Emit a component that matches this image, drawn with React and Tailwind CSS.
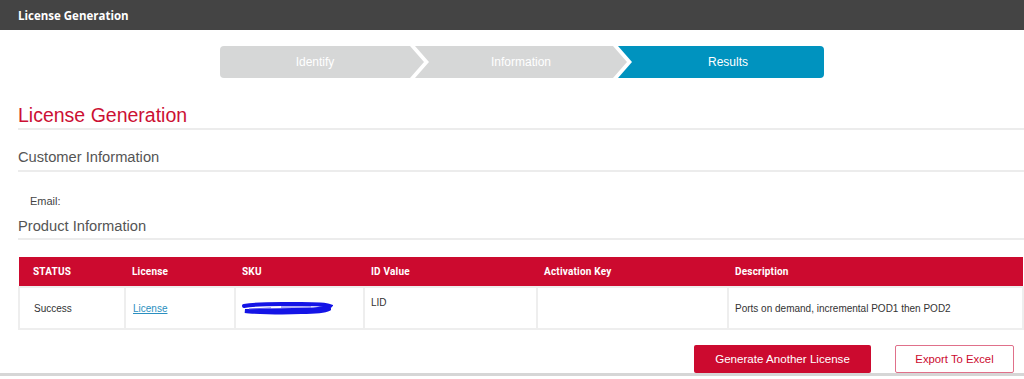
import React from "react";

const steps = [
    { label: "Identify", state: "done", cls: "w-[204px] rounded-l-[4px] pr-[14px] [clip-path:polygon(0_0,calc(100%_-_14px)_0,100%_50%,calc(100%_-_14px)_100%,0_100%)]" },
    { label: "Information", state: "done", cls: "w-[212px] -ml-[9px] px-[14px] [clip-path:polygon(0_0,calc(100%_-_14px)_0,100%_50%,calc(100%_-_14px)_100%,0_100%,14px_50%)]" },
    { label: "Results", state: "active", cls: "flex-1 -ml-[9px] rounded-r-[4px] pl-[14px] [clip-path:polygon(0_0,100%_0,100%_100%,0_100%,14px_50%)]" },
];

const columns = [
    { key: "status", label: "STATUS", width: "w-[106px]" },
    { key: "license", label: "License", width: "w-[110px]" },
    { key: "sku", label: "SKU", width: "w-[129px]" },
    { key: "idValue", label: "ID Value", width: "w-[173px]" },
    { key: "activationKey", label: "Activation Key", width: "w-[191px]" },
    { key: "description", label: "Description", width: "" },
];

// redacted SKU value in the screenshot
const Scribble = () => (
    <svg width="92" height="14" viewBox="0 0 92 14">
        <path
            d="M3 5 C20 2 40 3 60 3 C72 3 84 3 89 5 C86 8 70 9 52 9 C36 9 16 10 4 10 C10 11 40 12 60 11 C74 11 84 10 88 8"
            fill="none"
            stroke="#1414e6"
            strokeWidth="4"
            strokeLinecap="round"
        />
        <path d="M8 8 L30 7 M40 6 L70 6" stroke="#5a5af0" strokeWidth="1" />
    </svg>
);

const Stepper = () => (
    <div className="flex h-[32px] w-[604px] ml-[220px] mt-[16px] text-[12px] text-white">
        {steps.map((step) => (
            <div
                key={step.label}
                className={`shrink-0 flex items-center justify-center ${step.cls} ${
                    step.state === "active" ? "bg-[#0093bf]" : "bg-[#d6d7d7]"
                }`}
            >
                {step.label}
            </div>
        ))}
    </div>
);

const App = () => {
    return (
        <div className="w-[1024px] h-[379px] bg-white overflow-hidden font-['Liberation_Sans',Arial,sans-serif]">
            {/* Top bar */}
            <div className="h-[30px] bg-[#444444] flex items-center pl-[18px] pt-[1px]">
                <span className="text-white text-[11.5px] font-bold font-['Open_Sans',sans-serif]">License Generation</span>
            </div>

            <Stepper />

            <div className="pl-[18px]">
                <div className="mt-[26px] h-[26px] border-b-2 border-[#ececec] text-[19.5px] leading-[22px] text-[#cc1033]">
                    License Generation
                </div>

                <div className="pt-[18px] pb-[4px] border-b-2 border-[#ececec] text-[14.7px] leading-[18px] text-[#555555]">
                    Customer Information
                </div>

                <div className="mt-[22px] pl-[12px] text-[11px] leading-[14px] text-[#444444]">Email:</div>

                <div className="mt-[9px] pb-[3px] border-b-2 border-[#ececec] text-[14.7px] leading-[18px] text-[#555555]">
                    Product Information
                </div>

                {/* Results table */}
                <table className="mt-[17px] w-[1006px] table-fixed border-collapse text-[10px]">
                    <thead>
                        <tr className="h-[30px] bg-[#cc0a2f] text-white">
                            {columns.map((col, i) => (
                                <th
                                    key={col.key}
                                    className={`${col.width} ${i === 0 ? "pl-[14px]" : "pl-[7px]"} text-left font-bold font-['Roboto',sans-serif] tracking-[0.2px]`}
                                >
                                    {col.label}
                                </th>
                            ))}
                        </tr>
                    </thead>
                    <tbody>
                        <tr className="h-[42px] text-[#333333]">
                            <td className="border-2 border-[#eeeeee] pl-[14px]">Success</td>
                            <td className="border-2 border-[#eeeeee] pl-[7px]">
                                <a className="text-[#2a8fc0] underline" href="#">License</a>
                            </td>
                            <td className="border-2 border-[#eeeeee] pl-[5px]">
                                <Scribble />
                            </td>
                            <td className="border-2 border-[#eeeeee] pl-[6px] align-top pt-[7px]">LID</td>
                            <td className="border-2 border-[#eeeeee]"></td>
                            <td className="border-2 border-[#eeeeee] pl-[6px]">Ports on demand, incremental POD1 then POD2</td>
                        </tr>
                    </tbody>
                </table>
            </div>

            {/* Actions */}
            <div className="flex justify-end gap-[24px] pr-[10px] mt-[15px]">
                <button className="w-[177px] h-[28px] bg-[#cc0a2f] text-white text-[11.6px] rounded-[2px]">
                    Generate Another License
                </button>
                <button className="w-[119px] h-[28px] bg-white border border-[#e0708a] text-[#cc0a2f] text-[11.3px] rounded-[2px]">
                    Export To Excel
                </button>
            </div>
            <div className="h-[3px] bg-[#d6d6d6]"></div>
        </div>
    );
};

export default App;
